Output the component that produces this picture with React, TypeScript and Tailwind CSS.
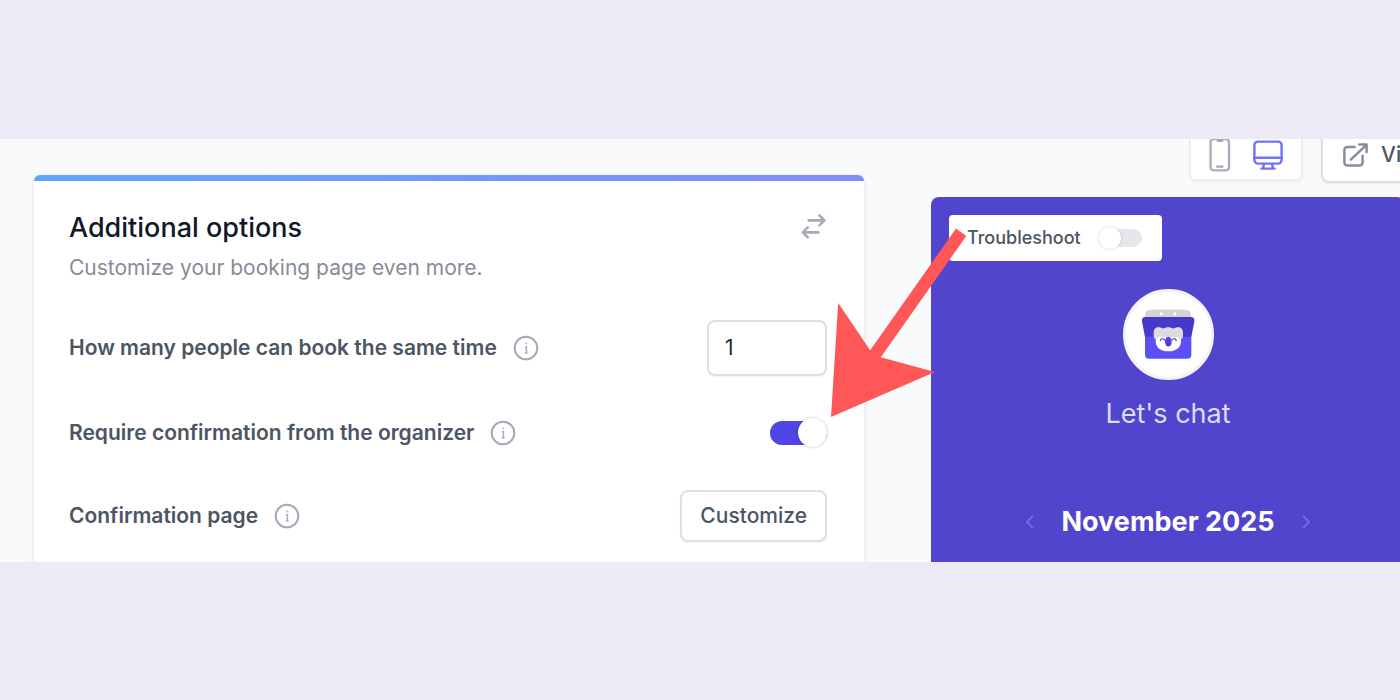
import { useState } from "react";

const LABEL = "text-[21px] leading-[34px] font-semibold text-[#4b5563]";

function InfoIcon() {
  return (
    <svg width="26" height="26" viewBox="0 0 26 26" fill="none" aria-hidden="true">
      <circle cx="13" cy="13" r="11.3" stroke="#a3a9b6" strokeWidth="2" />
      <circle cx="13.2" cy="8.4" r="1.1" fill="#c0c5ce" />
      <path d="M12 11.8h1.4v5.8M11.8 18h2.8" stroke="#a7adb9" strokeWidth="1.6" />
    </svg>
  );
}

function SwapIcon() {
  return (
    <svg width="26" height="26" viewBox="0 0 26 26" fill="none" stroke="#a5abb9" strokeWidth="2.6" strokeLinecap="round" strokeLinejoin="round">
      <path d="M7.6 7.4h15.8M18.4 2.4l5 5-5 5" />
      <path d="M17.4 19.4H1.8M6.8 14.4l-5 5 5 5" />
    </svg>
  );
}

function PhoneIcon() {
  return (
    <svg width="22" height="36" viewBox="0 0 22 36" fill="none">
      <rect x="1.6" y="2" width="18.4" height="31.4" rx="3.2" stroke="#a9afbb" strokeWidth="2.4" />
      <path d="M7.2 2.6c.2 1.6.8 2.4 1.8 2.4h3.8c1 0 1.6-.8 1.8-2.4z" fill="#a3a9b6" />
      <path d="M8 29.6h5.6" stroke="#a3a9b6" strokeWidth="2.2" strokeLinecap="round" />
    </svg>
  );
}

function DesktopIcon() {
  return (
    <svg width="30" height="30" viewBox="0 0 30 30" fill="none" stroke="#7571f3" strokeWidth="2.4" strokeLinecap="round" strokeLinejoin="round">
      <rect x="1.4" y="1.6" width="27.2" height="22" rx="3.6" />
      <path d="M1.4 17.8h27.2M11 24l-1 4.6M19 24l1 4.6M8.4 28.6h13.2" />
    </svg>
  );
}

function ExternalIcon() {
  return (
    <svg width="26" height="24" viewBox="0 0 26 24" fill="none" stroke="#878d99" strokeWidth="2.5" strokeLinecap="round" strokeLinejoin="round">
      <path d="M11.6 4H4.4a3 3 0 0 0-3 3v12.4a3 3 0 0 0 3 3h12.2a3 3 0 0 0 3-3v-6.6" />
      <path d="M16.2 1.6h7.4V9M23.4 1.8 7.8 16.6" />
    </svg>
  );
}

function Logo() {
  return (
    <svg width="56" height="52" viewBox="150 85 168 156" aria-hidden="true">
      <path d="M165 115v-9a16 16 0 0 1 16-16h106a16 16 0 0 1 16 16v9z" fill="#d3d3d5" />
      <circle cx="214" cy="102" r="4.5" fill="#fff" />
      <circle cx="255" cy="102" r="4.5" fill="#fff" />
      <path d="M165 168h139v57a12 12 0 0 1-12 12H177a12 12 0 0 1-12-12z" fill="#5b50f5" />
      <path d="M166 112h136q13 0 11 14l-9 45H165l-9-45q-2-14 10-14z" fill="#4439ca" />
      <path d="M197 168h76v16c0 20-15 31-38 31s-38-11-38-31z" fill="#fff" />
      <path
        d="M191 172v-14c0-9 6-15 14-15 6 0 11 2 15 4 4-2 9-4 15-4s11 2 15 4c4-2 9-4 15-4 8 0 14 6 14 15v14q-3 7-9 8v-3q-4-5-10-5h-50q-6 0-10 5v3q-6-1-9-8z"
        fill="#dcdce1"
      />
      <path d="M211 183q2-6 6-6t7 4M259 183q-2-6-6-6t-7 4" fill="none" stroke="#5b50f5" strokeWidth="4" strokeLinecap="round" />
      <path d="M235 171c6 0 10 7 10 15s-4 15-10 15-10-7-10-15 4-15 10-15z" fill="#4b40dd" />
    </svg>
  );
}

function Pointer() {
  return (
    <svg
      className="absolute top-[31px] -left-[100px] pointer-events-none"
      width="136"
      height="190"
      viewBox="831 228 136 190"
      aria-hidden="true"
    >
      <path d="M956 228.5 966.3 236 880.8 357.2 935 372 831 417 838.2 303 870.2 350.2Z" fill="#ff5757" />
    </svg>
  );
}

function OptionsCard() {
  const [people, setPeople] = useState("1");
  const [confirm, setConfirm] = useState(true);

  return (
    <div className="flex-1 min-w-0 mt-9 bg-white rounded-t-md shadow-[0_1px_4px_rgba(0,0,0,0.12)]">
      <div className="h-[6px] rounded-t-md bg-linear-to-r from-[#60a5fa] to-[#818cf8]" />
      <div className="flex flex-col gap-10 pt-[31px] pl-[35px] pr-[37px]">
        {/* Header */}
        <div className="flex items-start justify-between">
          <div>
            <h2 className="text-[27px] leading-8 font-medium text-[#111827]">Additional options</h2>
            <p className="mt-3 text-[21px] leading-6 text-[#868c98]">Customize your booking page even more.</p>
          </div>
          <button type="button" aria-label="Swap" className="mt-px">
            <SwapIcon />
          </button>
        </div>

        {/* People per slot */}
        <div className="flex items-center justify-between">
          <div className="flex items-center gap-4">
            <label htmlFor="people" className={LABEL}>
              How many people can book the same time
            </label>
            <InfoIcon />
          </div>
          <input
            id="people"
            type="text"
            value={people}
            onChange={(e) => setPeople(e.target.value)}
            className="w-[120px] h-14 px-4 rounded-lg border-2 border-[#dcdfe4] bg-white text-[21px] text-[#1f2937] shadow-xs outline-none"
          />
        </div>

        {/* Confirmation toggle */}
        <div className="flex items-center justify-between">
          <div className="flex items-center gap-4">
            <label htmlFor="confirm" className={LABEL}>
              Require confirmation from the organizer
            </label>
            <InfoIcon />
          </div>
          <input
            id="confirm"
            type="checkbox"
            checked={confirm}
            onChange={(e) => setConfirm(e.target.checked)}
            className="appearance-none flex items-center w-[57px] h-6 rounded-full bg-[#e5e7eb] checked:justify-end checked:bg-[#4f46e5] before:block before:shrink-0 before:size-[29px] before:rounded-full before:bg-white before:shadow-[0_0_2px_1px_rgba(0,0,0,0.12)]"
          />
        </div>

        {/* Confirmation page */}
        <div className="flex items-center justify-between">
          <div className="flex items-center gap-4">
            <span className={LABEL}>Confirmation page</span>
            <InfoIcon />
          </div>
          <button
            type="button"
            className="h-[52px] px-[18px] rounded-lg border-2 border-[#dcdfe4] bg-white text-[21px] font-medium text-[#4b5563] shadow-xs"
          >
            Customize
          </button>
        </div>
      </div>
    </div>
  );
}

function Preview() {
  const [troubleshoot, setTroubleshoot] = useState(false);

  return (
    <div className="w-[474px] shrink-0 -mt-3 -mr-[5px]">
      {/* Toolbar */}
      <div className="flex items-end pl-[258px]">
        <div className="flex items-center gap-[22px] h-[52px] px-[18px] mb-[2px] shrink-0 rounded-md border-2 border-[#eceef1] bg-white shadow-xs">
          <button type="button" aria-label="Mobile preview">
            <PhoneIcon />
          </button>
          <button type="button" aria-label="Desktop preview">
            <DesktopIcon />
          </button>
        </div>
        <button
          type="button"
          className="flex items-center gap-3 h-14 px-5 ml-[18px] shrink-0 rounded-lg border-2 border-[#dcdfe4] bg-white text-[21px] font-medium text-[#4b5563] shadow-xs"
        >
          <ExternalIcon />
          View
        </button>
      </div>

      <div className="relative flex flex-col items-center mt-[14px] pt-[18px] pb-6 px-[18px] rounded-t-lg bg-[#5145cd]">
        <div className="self-start flex items-center gap-[18px] h-[46px] pl-[18px] pr-5 rounded-[4px] bg-white">
          <label htmlFor="troubleshoot" className="text-[18px] font-medium text-[#4b5563]">
            Troubleshoot
          </label>
          <input
            id="troubleshoot"
            type="checkbox"
            checked={troubleshoot}
            onChange={(e) => setTroubleshoot(e.target.checked)}
            className="appearance-none flex items-center w-[43px] h-[18px] rounded-full bg-[#e5e7eb] checked:justify-end checked:bg-[#4f46e5] before:block before:shrink-0 before:size-[22px] before:rounded-full before:bg-white before:shadow-[0_0_2px_1px_rgba(0,0,0,0.1)]"
          />
        </div>
        <div className="flex items-center justify-center mt-7 size-[91px] rounded-full border-[3px] border-[#f3f4f6] bg-white">
          <Logo />
        </div>
        <p className="mt-[18px] text-[27px] leading-8 text-[#dfdcf8]">Let's chat</p>
        <div className="flex items-center gap-[26px] mt-[76px]">
          <button type="button" aria-label="Previous month">
            <svg width="10" height="16" viewBox="0 0 10 16" fill="none" stroke="#776cdc" strokeWidth="1.8">
              <path d="M8 1.8 2 8l6 6.2" />
            </svg>
          </button>
          <h3 className="text-[27px] leading-8 font-bold text-white">November 2025</h3>
          <button type="button" aria-label="Next month">
            <svg width="10" height="16" viewBox="0 0 10 16" fill="none" stroke="#776cdc" strokeWidth="1.8">
              <path d="m2 1.8 6 6.2-6 6.2" />
            </svg>
          </button>
        </div>
        <Pointer />
      </div>
    </div>
  );
}

export default function App() {
  return (
    <div className="min-h-screen flex flex-col justify-center bg-[#eee9f7] font-[Inter,sans-serif]">
      <main className="flex gap-[67px] pl-[34px] overflow-hidden bg-[#f9fafc]">
        <OptionsCard />
        <Preview />
      </main>
    </div>
  );
}
